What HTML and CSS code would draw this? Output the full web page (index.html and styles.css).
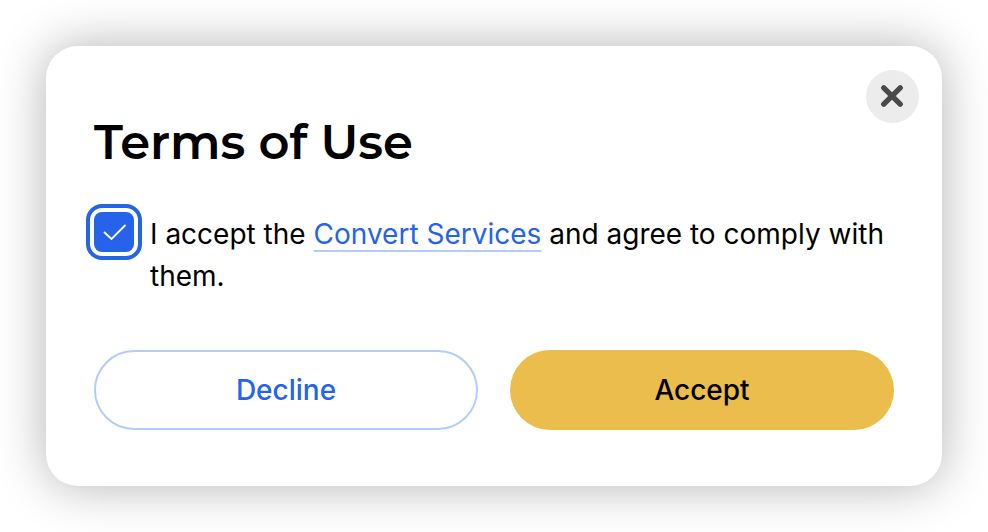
FILE: index.html
```
<!DOCTYPE html>
<html lang="en">
<head>
  <meta charset="UTF-8">
  <title>Terms of Use</title>
  <link rel="stylesheet" href="styles.css">
</head>
<body>

<div class="modal" role="dialog" aria-labelledby="title">
  <button class="close" aria-label="Close">
    <svg width="24" height="24" viewBox="0 0 24 24">
      <path d="M3.8 3.8l16.4 16.4M20.2 3.8L3.8 20.2" />
    </svg>
  </button>

  <h1 class="title" id="title">Terms of Use</h1>

  <div class="terms">
    <span class="checkbox" role="checkbox" aria-checked="true" tabindex="0">
      <svg width="40" height="40" viewBox="0 0 40 40">
        <path d="M10 20l7.5 7L31.5 13" />
      </svg>
    </span>
    <p class="text">I accept the <a class="link" href="#">Convert Services</a> and agree to comply with them.</p>
  </div>

  <div class="actions">
    <button class="btn decline">Decline</button>
    <button class="btn accept">Accept</button>
  </div>
</div>

</body>
</html>
```
FILE: styles.css
```
body {
  margin: 0;
  padding: 46px;
  background-color: #fff;
  font-family: Inter, "Liberation Sans", sans-serif;
  color: #000;
}

.modal {
  position: relative;
  box-sizing: border-box;
  width: 896px;
  height: 440px;
  padding: 66px 48px 56px;
  border-radius: 32px;
  background-color: #fff;
  box-shadow: 0 0 50px rgba(0, 0, 0, 0.3);
}

/* Close button */
.close {
  position: absolute;
  top: 23.5px;
  right: 23.5px;
  display: flex;
  align-items: center;
  justify-content: center;
  width: 53px;
  height: 53px;
  padding: 0;
  border: 0;
  border-radius: 50%;
  background-color: #ececec;
}

.close svg {
  fill: none;
  stroke: #4a4a4a;
  stroke-width: 5.4;
  stroke-linecap: round;
}

.title {
  margin: 0;
  font-family: Montserrat, Inter, sans-serif;
  font-size: 48px;
  font-weight: 600;
  line-height: 60px;
}

/* Checkbox row */
.terms {
  display: flex;
  gap: 16px;
  margin-top: 40px;
}

.checkbox {
  flex: none;
  width: 40px;
  height: 40px;
  border-radius: 8px;
  background-color: #2563eb;
  outline: 4px solid #2563eb;
  outline-offset: 4px;
}

.checkbox svg {
  display: block;
  fill: none;
  stroke: #fff;
  stroke-width: 1.8;
}

.text {
  margin: 1px 0 0;
  font-size: 28px;
  line-height: 42px;
}

.link {
  color: #2563eb;
  text-decoration: underline 2px #b1cdfb;
  text-underline-offset: 6px;
  text-decoration-skip-ink: none;
}

/* Buttons */
.actions {
  display: flex;
  gap: 32px;
  margin-top: 53px;
}

.btn {
  box-sizing: border-box;
  width: 384px;
  height: 80px;
  border: 0;
  border-radius: 40px;
  font-family: inherit;
  font-size: 28px;
  font-weight: 500;
}

.decline {
  border: 2px solid #b1cdfb;
  background-color: #fff;
  color: #2563eb;
}

.accept {
  background-color: #eabd4c;
  color: #000;
}
```
